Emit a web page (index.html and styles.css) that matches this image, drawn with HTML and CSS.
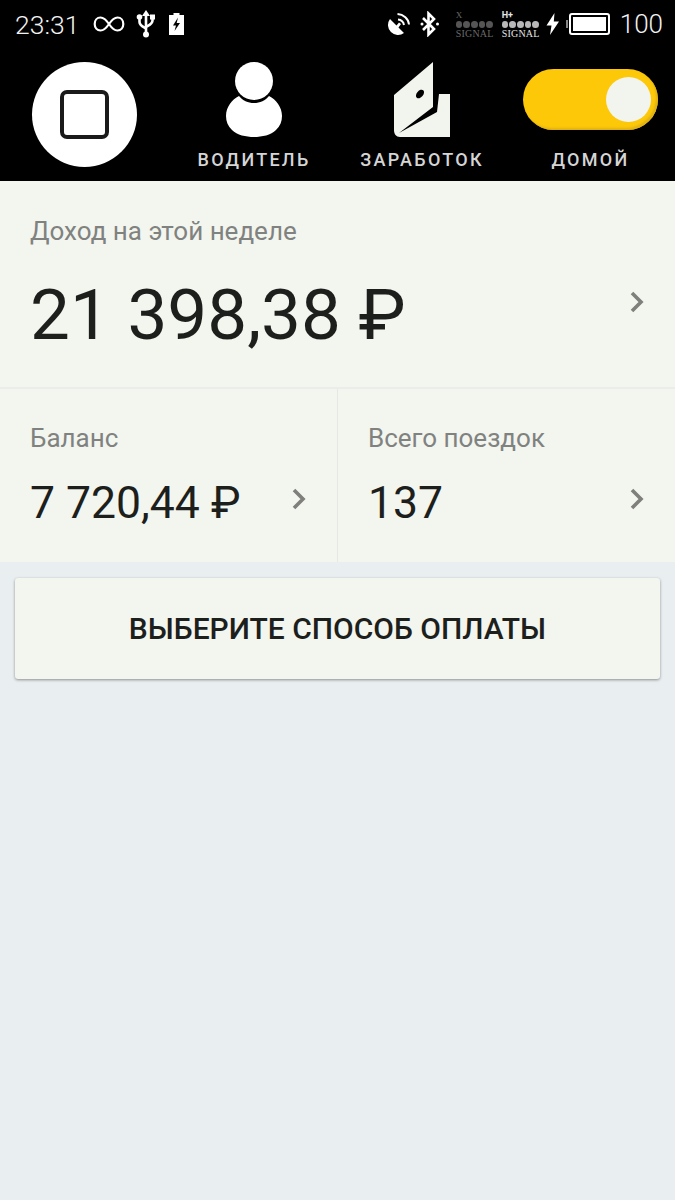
FILE: index.html
```html
<!DOCTYPE html>
<html lang="ru">
<head>
<meta charset="utf-8">
<title>Доход</title>
<link rel="stylesheet" href="styles.css">
</head>
<body>
<div class="screen">
  <header class="top">
    <div class="status">
      <div class="status-left">
        <span class="time">23:31</span>
        <svg class="i-inf" viewBox="0 0 32 18"><path d="M16 9C13 4.500 10.500 2.500 7.500 2.500 4 2.500 1.700 5.500 1.700 9s2.300 6.500 5.800 6.500c3 0 5.500-2 8.500-6.500s5.500-6.500 8.500-6.500c3.500 0 5.800 3 5.800 6.500s-2.300 6.500-5.800 6.500c-3 0-5.500-2-8.500-6.500z" fill="none" stroke="#fff" stroke-width="2.200"/></svg>
        <svg class="i-usb" viewBox="0 0 20 28"><path d="M10 4V24M3.500 8v4c0 3.500 3 4.500 6.500 6.500M16.500 8v2.500c0 3.500-3 4.500-6.500 6.500" fill="none" stroke="#fff" stroke-width="2.600"/><path d="M10 0l4 6H6z" fill="#fff"/><circle cx="3.500" cy="7" r="2.800" fill="#fff"/><rect x="14" y="4.500" width="5" height="5" fill="#fff"/><circle cx="10" cy="24.500" r="3" fill="#fff"/></svg>
        <svg class="i-charge" viewBox="0 0 15 22"><path d="M4.500 0h6v2H15v20H0V2h4.500z" fill="#fff"/><path d="M9 4.500L4 12.500h3l-1.500 5.500 5.500-8H7.700z" fill="#000"/></svg>
      </div>
      <div class="status-right">
        <svg class="i-sat" viewBox="0 0 25 25"><path d="M4 7A10 10 0 0 0 18 21L12.500 15.500 15 12 13 10.500 10.500 13.500z" fill="#fff"/><path d="M12 7.500c3 .3 5.500 2.500 6 5.500M11.500 2c6 .3 11 5 11.500 10.500" fill="none" stroke="#fff" stroke-width="2"/></svg>
        <svg class="i-bt" viewBox="0 0 20 26"><path d="M3 7l11 11-5.500 5.500v-21L14 8 3 19" fill="none" stroke="#fff" stroke-width="2.600"/><circle cx="2" cy="13" r="1.500" fill="#fff"/><circle cx="17.500" cy="13" r="1.500" fill="#fff"/></svg>
        <div class="signal dim">
          <span class="sig-top">X</span>
          <span class="dots"><i></i><i></i><i></i><i></i><i></i></span>
          <span class="sig-name">SIGNAL</span>
        </div>
        <div class="signal">
          <span class="sig-top sans">H+</span>
          <span class="dots"><i></i><i></i><i></i><i></i><i></i></span>
          <span class="sig-name">SIGNAL</span>
        </div>
        <svg class="i-bolt" viewBox="0 0 14 22"><path d="M8.500 0L.5 12.500h5L4 22l9-13.500H7.800z" fill="#fff"/></svg>
        <div class="battery"><span class="battery-fill"></span></div>
        <span class="level">100</span>
      </div>
    </div>
    <nav class="nav">
      <div class="stop"><span class="stop-square"></span></div>
      <div class="tab tab-driver">
        <svg class="i-driver" viewBox="0 0 56 76"><circle cx="28" cy="19" r="19" fill="#fff"/><path d="M13 34c3.500 4.500 9 7 15 7s11.500-2.500 15-7c7 3.500 13 11 13 20 0 5.500-2 10.500-6 14-5 5-14 7-22 7s-17-2-22-7c-4-3.500-6-8.500-6-14 0-9 6-16.500 13-20z" fill="#fff"/></svg>
        <span class="tab-label">ВОДИТЕЛЬ</span>
      </div>
      <div class="tab tab-earn">
        <svg class="i-wallet" viewBox="0 0 57 75"><path d="M39 0V45L5 71 43 50 45 32H56V75H6C2 75 0 72 0 68V33z" fill="#f2f4ee"/><ellipse cx="26" cy="32" rx="3.200" ry="5" transform="rotate(40 26 32)" fill="#000"/></svg>
        <span class="tab-label">ЗАРАБОТОК</span>
      </div>
      <div class="tab tab-home">
        <div class="toggle"><span class="knob"></span></div>
        <span class="tab-label">ДОМОЙ</span>
      </div>
    </nav>
  </header>
  <section class="week">
    <div>
      <div class="label">Доход на этой неделе</div>
      <div class="week-value">21 398,38 ₽</div>
    </div>
    <svg class="chev" viewBox="0 0 16 24"><path d="M3 3l9 9-9 9" fill="none" stroke="#7f807c" stroke-width="3.600"/></svg>
  </section>
  <section class="stats">
    <div class="stat">
      <div>
        <div class="label">Баланс</div>
        <div class="stat-value">7 720,44 ₽</div>
      </div>
      <svg class="chev" viewBox="0 0 16 24"><path d="M3 3l9 9-9 9" fill="none" stroke="#7f807c" stroke-width="3.600"/></svg>
    </div>
    <div class="stat">
      <div>
        <div class="label">Всего поездок</div>
        <div class="stat-value">137</div>
      </div>
      <svg class="chev" viewBox="0 0 16 24"><path d="M3 3l9 9-9 9" fill="none" stroke="#7f807c" stroke-width="3.600"/></svg>
    </div>
  </section>
  <div class="pay-wrap">
    <button class="pay">ВЫБЕРИТЕ СПОСОБ ОПЛАТЫ</button>
  </div>
</div>
</body>
</html>
```
FILE: styles.css
```css
* { box-sizing: border-box; }
html, body { margin: 0; padding: 0; }
body { background: #e9eef1; font-family: Roboto, "Noto Sans", sans-serif; color: #1d1f1c; }
.screen { width: 675px; height: 1200px; overflow: hidden; background: #e9eef1; }

.top { background: #000; height: 184px; border-bottom: 3px solid #f4f6f0; }
.status { height: 48px; display: flex; justify-content: space-between; align-items: center; padding: 0 12px 0 15px; color: #f2f2f2; }
.status-left, .status-right { display: flex; align-items: center; }
.time { font-size: 26.5px; font-weight: 300; width: 64px; }
.i-inf { width: 32px; height: 18px; margin-left: 14px; }
.i-usb { width: 20px; height: 28px; margin-left: 11px; }
.i-charge { width: 15px; height: 22px; margin-left: 13px; }
.i-sat { width: 25px; height: 25px; }
.i-bt { width: 20px; height: 26px; margin-left: 9px; }
.signal { display: flex; flex-direction: column; width: 37px; margin-left: 9px; font-family: "Liberation Serif", serif; color: #e6e6e6; line-height: 1; }
.signal.dim { color: #6a6a6a; margin-left: 16px; }
.sig-top { font-size: 9px; height: 9px; }
.sig-top.sans { font-family: Roboto, sans-serif; font-weight: 700; }
.sig-name { font-size: 10px; letter-spacing: .2px; height: 9px; }
.dots { display: flex; gap: 1px; height: 9px; align-items: center; }
.dots i { width: 7px; height: 7px; border-radius: 50%; background: currentColor; opacity: .8; }
.i-bolt { width: 14px; height: 22px; margin-left: 7px; }
.battery { width: 41px; height: 22px; margin-left: 9px; border: 2px solid #fff; border-radius: 3px; padding: 2px; position: relative; }
.battery::before { content: ""; position: absolute; left: -5px; top: 5px; width: 2px; height: 8px; background: #888; }
.battery-fill { display: block; height: 100%; background: #fff; }
.level { font-size: 26px; font-weight: 300; margin-left: 10px; }

.nav { height: 133px; display: flex; }
.stop { width: 105px; height: 105px; margin: 14px 0 0 32px; border-radius: 50%; background: #fff; display: flex; align-items: center; justify-content: center; flex: none; }
.stop-square { width: 49px; height: 49px; border: 4px solid #1a1a1a; border-radius: 7px; }
.tab { display: flex; flex-direction: column; align-items: center; }
.tab-driver { width: 130px; margin-left: 52px; }
.tab-earn { width: 140px; margin-left: 33px; }
.tab-home { width: 135px; margin-left: 31px; }
.i-driver { width: 56px; height: 76px; margin-top: 14px; }
.i-wallet { width: 57px; height: 75px; margin-top: 14px; }
.toggle { width: 135px; height: 61px; margin-top: 21px; border-radius: 31px; background: #fdc808; display: flex; align-items: center; justify-content: flex-end; padding-right: 7px; box-shadow: inset -2px -2px 2px #e0b214; }
.knob { width: 45px; height: 45px; border-radius: 50%; background: #f2f4ee; }
.tab-label { font-size: 18px; font-weight: 500; letter-spacing: 2.3px; color: #d5d5d5; line-height: 22px; margin-top: 11px; white-space: nowrap; }
.tab-earn .tab-label { margin-top: 12px; }
.tab-home .tab-label { margin-top: 19px; }

.week { height: 205px; background: #f3f5ef; border-bottom: 2px solid #ebedea; padding: 32px 30px 0; display: flex; justify-content: space-between; align-items: flex-start; }
.label { font-size: 26px; color: #808280; line-height: 30px; }
.week-value { font-size: 71px; line-height: 84px; margin-top: 27px; }
.week .chev { margin-top: 74px; }
.chev { width: 16px; height: 24px; flex: none; }

.stats { height: 173px; background: #f3f5ef; display: flex; }
.stat { flex: 1; padding: 34px 30px 0; display: flex; justify-content: space-between; align-items: flex-start; }
.stat + .stat { border-left: 1px solid #e6e8e6; }
.stat-value { font-size: 44.5px; line-height: 54px; margin-top: 23px; }
.stat .chev { margin-top: 64px; }

.pay-wrap { padding: 16px 15px; }
.pay { width: 100%; height: 101px; background: #f3f5ef; border: 0; border-radius: 3px; box-shadow: 0 1px 3px rgba(0,0,0,.4); font: 500 30px Roboto, sans-serif; color: #1d1f1c; display: block; }
```
